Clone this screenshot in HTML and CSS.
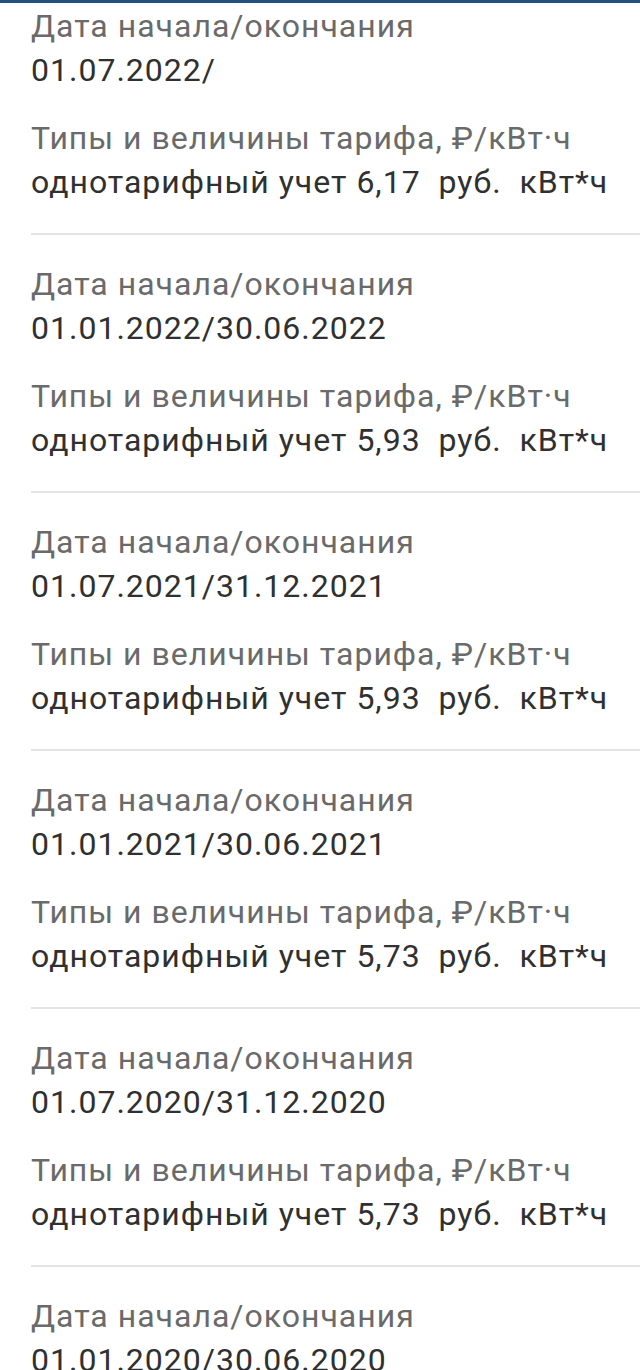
FILE: index.html
```html
<!DOCTYPE html>
<html lang="ru">

<head>
    <meta charset="UTF-8">
    <meta name="viewport" content="width=device-width, initial-scale=1.0">
    <title>Тарифы</title>
    <link rel="stylesheet" href="styles.css">
</head>

<body>
    <div class="top-bar"></div>
    <div class="tariffs">
        <div class="tariff first">
            <div class="field">
                <div class="label">Дата начала/окончания</div>
                <div class="value">01.07.2022/</div>
            </div>
            <div class="field">
                <div class="label">Типы и величины тарифа, ₽/кВт·ч</div>
                <div class="value">однотарифный учет 6,17&nbsp; руб.&nbsp; кВт*ч</div>
            </div>
        </div>

        <div class="tariff">
            <div class="field">
                <div class="label">Дата начала/окончания</div>
                <div class="value">01.01.2022/30.06.2022</div>
            </div>
            <div class="field">
                <div class="label">Типы и величины тарифа, ₽/кВт·ч</div>
                <div class="value">однотарифный учет 5,93&nbsp; руб.&nbsp; кВт*ч</div>
            </div>
        </div>

        <div class="tariff">
            <div class="field">
                <div class="label">Дата начала/окончания</div>
                <div class="value">01.07.2021/31.12.2021</div>
            </div>
            <div class="field">
                <div class="label">Типы и величины тарифа, ₽/кВт·ч</div>
                <div class="value">однотарифный учет 5,93&nbsp; руб.&nbsp; кВт*ч</div>
            </div>
        </div>

        <div class="tariff">
            <div class="field">
                <div class="label">Дата начала/окончания</div>
                <div class="value">01.01.2021/30.06.2021</div>
            </div>
            <div class="field">
                <div class="label">Типы и величины тарифа, ₽/кВт·ч</div>
                <div class="value">однотарифный учет 5,73&nbsp; руб.&nbsp; кВт*ч</div>
            </div>
        </div>

        <div class="tariff">
            <div class="field">
                <div class="label">Дата начала/окончания</div>
                <div class="value">01.07.2020/31.12.2020</div>
            </div>
            <div class="field">
                <div class="label">Типы и величины тарифа, ₽/кВт·ч</div>
                <div class="value">однотарифный учет 5,73&nbsp; руб.&nbsp; кВт*ч</div>
            </div>
        </div>

        <div class="tariff">
            <div class="field">
                <div class="label">Дата начала/окончания</div>
                <div class="value">01.01.2020/30.06.2020</div>
            </div>
            <div class="field">
                <div class="label">Типы и величины тарифа, ₽/кВт·ч</div>
                <div class="value">однотарифный учет 5,73&nbsp; руб.&nbsp; кВт*ч</div>
            </div>
        </div>
    </div>
</body>

</html>
```

FILE: styles.css
```css
* {
    box-sizing: border-box;
}

body {
    margin: 0;
    background-color: #fff;
    font-family: Roboto, "Noto Sans", sans-serif;
    height: 1370px;
    overflow: hidden;
}

.top-bar {
    height: 3px;
    background-color: #24507f;
}

.tariffs {
    margin-left: 31px;
}

.tariff {
    display: flex;
    flex-direction: column;
    gap: 24px;
    padding: 27px 0 29px;
    border-bottom: 2px solid #e4e4e4;
}

/* list is scrolled, first card is cut at the top */
.tariff.first {
    padding-top: 1px;
}

.label,
.value {
    font-size: 32px;
    line-height: 44px;
    letter-spacing: 1px;
    white-space: nowrap;
}

.label {
    color: #6a6a6a;
}

.value {
    color: #303030;
}
```
